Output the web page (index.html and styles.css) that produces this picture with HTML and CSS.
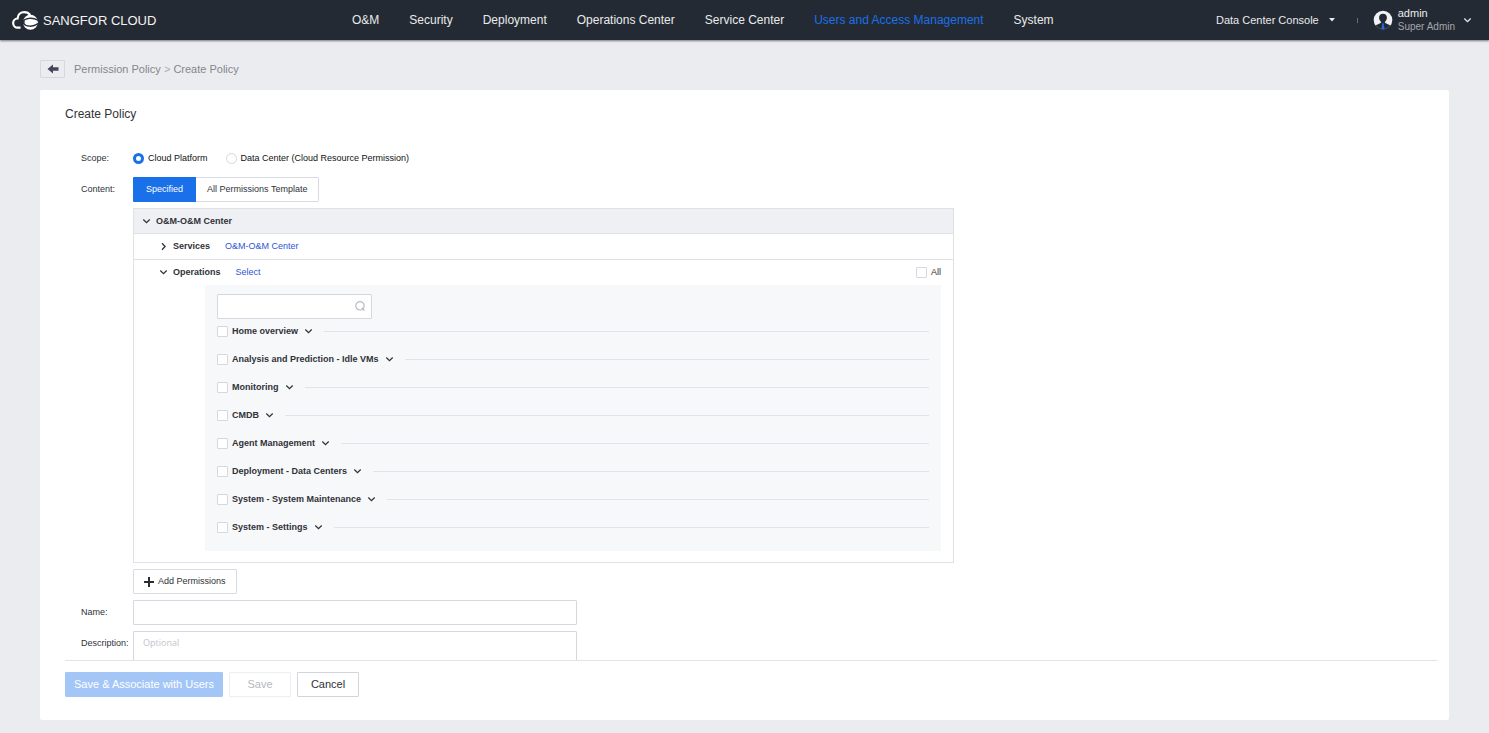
FILE: index.html
```html
<!DOCTYPE html>
<html lang="en">
<head>
<meta charset="utf-8">
<meta name="viewport" content="width=device-width, initial-scale=1">
<title>Create Policy</title>
<link rel="stylesheet" href="styles.css">
</head>
<body>
<svg class="sprite" aria-hidden="true">
  <symbol id="chevron-down" viewBox="0 0 9 9"><path d="M1.3 2.5 4.5 5.6 7.7 2.5" fill="none" stroke="currentColor" stroke-width="1.3"/></symbol>
  <symbol id="chevron-right" viewBox="0 0 9 9"><path d="M3 1.3 6.1 4.5 3 7.7" fill="none" stroke="currentColor" stroke-width="1.3"/></symbol>
</svg>

<header class="topbar">
  <a class="brand" href="#">
    <svg class="brand-logo" viewBox="0 0 26 20" aria-hidden="true">
      <path d="M8.6 17.6H5.8A4.5 4.5 0 0 1 5.6 8.5C5.8 4.6 8.6 2.1 12.2 2.1 14.8 2.1 16.9 3.2 18.2 5" fill="none" stroke="#fff" stroke-width="2.2"/>
      <circle cx="18.4" cy="12.2" r="7.5" fill="#fff"/>
      <path d="M10.4 11.8C13 8.2 20 6.8 26 10.2M10.4 12.6C14 17 21 17.4 26 13.6" fill="none" stroke="#242a33" stroke-width="1.4"/>
      <path d="M9.8 12.2 12.6 10.4V14Z" fill="#242a33"/>
    </svg>
    <span>SANGFOR CLOUD</span>
  </a>
  <nav class="nav">
    <a href="#">O&amp;M</a>
    <a href="#">Security</a>
    <a href="#">Deployment</a>
    <a href="#">Operations Center</a>
    <a href="#">Service Center</a>
    <a class="active" href="#" aria-current="page">Users and Access Management</a>
    <a href="#">System</a>
  </nav>
  <div class="account">
    <button class="console" type="button">Data Center Console
      <svg class="caret" viewBox="0 0 6 4" aria-hidden="true"><path d="M0 0H6L3 3.5Z" fill="currentColor"/></svg>
    </button>
    <span class="separator"></span>
    <button class="user" type="button">
      <svg class="avatar" viewBox="0 0 20 20" aria-hidden="true">
        <circle cx="10" cy="10" r="9.3" fill="#f1f2f3"/>
        <path d="M10 3.8C7.5 3.8 6 5.4 6.1 7.7 6.2 9.8 7.1 11.1 8.3 12 7.8 13.8 3.6 14.2 2.4 16A9.8 9.8 0 0 0 17.6 16C16.4 14.2 12.2 13.8 11.7 12 12.9 11.1 13.8 9.8 13.9 7.7 14 5.4 12.5 3.8 10 3.8Z" fill="#242a33"/>
        <path d="M3 16A9.3 9.3 0 0 0 17 16" fill="none" stroke="#596069" stroke-width=".6"/>
        <path d="M8.7 13.4H11.3L10.7 15 11.7 18.4 10 19.4 8.3 18.4 9.3 15Z" fill="#1a70e8"/>
      </svg>
      <span class="user-text"><span class="user-name">admin</span><span class="user-role">Super Admin</span></span>
      <svg class="icon" aria-hidden="true"><use href="#chevron-down"/></svg>
    </button>
  </div>
</header>

<div class="breadcrumb">
  <button class="back" type="button" aria-label="Back">
    <svg viewBox="0 0 12 10" aria-hidden="true"><path d="M.5 5 6 .5V3.3H11.5V6.7H6V9.5Z" fill="#414658"/></svg>
  </button>
  <nav><a href="#">Permission Policy</a> <span class="crumb-arrow">&gt;</span> <span>Create Policy</span></nav>
</div>

<main class="card">
  <h1 class="title">Create Policy</h1>
  <form class="form" id="policy">
    <div class="row" role="radiogroup" aria-labelledby="scope-label">
      <span class="label" id="scope-label">Scope:</span>
      <div class="radios">
        <label class="choice"><input class="radio" type="radio" name="scope" checked>Cloud Platform</label>
        <label class="choice"><input class="radio" type="radio" name="scope">Data Center (Cloud Resource Permission)</label>
      </div>
    </div>
    <div class="row">
      <span class="label">Content:</span>
      <div class="content">
        <div class="tabs">
          <button class="tab selected" type="button">Specified</button>
          <button class="tab" type="button">All Permissions Template</button>
        </div>
        <section class="panel">
          <div class="panel-head">
            <button class="toggle" type="button" aria-expanded="true"><svg class="icon" aria-hidden="true"><use href="#chevron-down"/></svg>O&amp;M-O&amp;M Center</button>
          </div>
          <div class="panel-row services">
            <button class="toggle" type="button" aria-expanded="false"><svg class="icon" aria-hidden="true"><use href="#chevron-right"/></svg>Services</button>
            <a class="link" href="#">O&amp;M-O&amp;M Center</a>
          </div>
          <div class="panel-row">
            <button class="toggle" type="button" aria-expanded="true"><svg class="icon" aria-hidden="true"><use href="#chevron-down"/></svg>Operations</button>
            <a class="link" href="#">Select</a>
            <label class="choice all"><input class="check" type="checkbox">All</label>
          </div>
          <div class="operations">
            <div class="search">
              <input class="search-input" type="search" aria-label="Search operations">
              <svg class="search-icon" viewBox="0 0 12 12" aria-hidden="true"><circle cx="6" cy="5.8" r="4.2" fill="none" stroke="#b9bbc0" stroke-width="1.2"/><path d="M7.8 7.8 10.4 10.6" stroke="#b9bbc0" stroke-width="1.3"/></svg>
            </div>
            <ul class="groups">
              <li class="group"><label class="choice"><input class="check" type="checkbox">Home overview</label><button class="expand" type="button" aria-label="Expand Home overview"><svg class="icon"><use href="#chevron-down"/></svg></button></li>
              <li class="group"><label class="choice"><input class="check" type="checkbox">Analysis and Prediction - Idle VMs</label><button class="expand" type="button" aria-label="Expand Analysis and Prediction"><svg class="icon"><use href="#chevron-down"/></svg></button></li>
              <li class="group"><label class="choice"><input class="check" type="checkbox">Monitoring</label><button class="expand" type="button" aria-label="Expand Monitoring"><svg class="icon"><use href="#chevron-down"/></svg></button></li>
              <li class="group"><label class="choice"><input class="check" type="checkbox">CMDB</label><button class="expand" type="button" aria-label="Expand CMDB"><svg class="icon"><use href="#chevron-down"/></svg></button></li>
              <li class="group"><label class="choice"><input class="check" type="checkbox">Agent Management</label><button class="expand" type="button" aria-label="Expand Agent Management"><svg class="icon"><use href="#chevron-down"/></svg></button></li>
              <li class="group"><label class="choice"><input class="check" type="checkbox">Deployment - Data Centers</label><button class="expand" type="button" aria-label="Expand Deployment"><svg class="icon"><use href="#chevron-down"/></svg></button></li>
              <li class="group"><label class="choice"><input class="check" type="checkbox">System - System Maintenance</label><button class="expand" type="button" aria-label="Expand System Maintenance"><svg class="icon"><use href="#chevron-down"/></svg></button></li>
              <li class="group"><label class="choice"><input class="check" type="checkbox">System - Settings</label><button class="expand" type="button" aria-label="Expand Settings"><svg class="icon"><use href="#chevron-down"/></svg></button></li>
            </ul>
          </div>
        </section>
        <button class="add" type="button"><svg class="plus" viewBox="0 0 10 10" aria-hidden="true"><path d="M5 0V10M0 5H10" stroke="#2b2d33" stroke-width="2"/></svg>Add Permissions</button>
      </div>
    </div>
    <div class="row">
      <label class="label" for="name">Name:</label>
      <input class="field" id="name" type="text">
    </div>
    <div class="row">
      <label class="label" for="description">Description:</label>
      <textarea class="field area" id="description" placeholder="Optional"></textarea>
    </div>
  </form>
  <footer class="actions">
    <button class="btn primary" type="submit" form="policy" disabled>Save &amp; Associate with Users</button>
    <button class="btn save" type="submit" form="policy" disabled>Save</button>
    <button class="btn" type="button">Cancel</button>
  </footer>
</main>
</body>
</html>
```
FILE: styles.css
```css
* { box-sizing: border-box; }

body {
  margin: 0;
  height: 100vh;
  display: flex;
  flex-direction: column;
  background: #ebecf0;
  color: #303238;
  font: 9px/13px "Liberation Sans", Arial, sans-serif;
}

.sprite { display: none; }
a { color: inherit; text-decoration: none; }
button { padding: 0; border: 0; background: none; color: inherit; font: inherit; cursor: pointer; }
input, textarea { margin: 0; font: inherit; }
.icon { width: 9px; height: 9px; flex: none; }

.topbar {
  flex: none;
  display: grid;
  grid-template-columns: 340px 1fr auto;
  align-items: center;
  height: 40px;
  padding: 0 17px 0 12px;
  background: #242a33;
  box-shadow: 0 1px 2px rgba(36, 42, 51, 0.6);
  color: #e9eaec;
}
.brand { display: flex; align-items: center; gap: 5px; font-size: 13px; color: #f4f4f5; }
.brand-logo { width: 26px; height: 20px; }
.nav { display: flex; gap: 30px; font-size: 12px; white-space: nowrap; }
.nav .active { color: #1a70e8; }
.account { display: flex; align-items: center; font-size: 11px; white-space: nowrap; }
.console { display: flex; align-items: center; gap: 10px; }
.caret { width: 6px; height: 4px; }
.separator { width: 1px; height: 5px; margin: 0 15px 0 22px; background: #6a6f77; }
.user { display: flex; align-items: center; text-align: left; }
.avatar { width: 20px; height: 20px; margin-right: 5px; }
.user-text { display: flex; flex-direction: column; margin-right: 8px; }
.user-role { font-size: 10px; color: #a3a6ab; }

.breadcrumb {
  flex: none;
  display: flex;
  align-items: center;
  gap: 9px;
  height: 50px;
  padding: 8px 40px 0;
  color: #85878c;
  font-size: 11px;
}
.back {
  display: grid;
  place-items: center;
  width: 25px;
  height: 18px;
  border: 1px solid #d5d7dd;
  border-radius: 1px;
}
.back svg { width: 12px; height: 10px; }
.crumb-arrow { color: #a8aab0; }

.card {
  flex: 1;
  min-height: 0;
  display: flex;
  flex-direction: column;
  margin: 0 40px 13px;
  padding: 0 12px 0 25px;
  background: #fff;
  border-radius: 2px;
}
.title { flex: none; margin: 0; padding: 16px 0 24px; font-size: 12px; font-weight: 400; line-height: 16px; }

.form {
  flex: 1;
  min-height: 0;
  overflow: hidden;
  display: flex;
  flex-direction: column;
  gap: 6px;
  padding-left: 16px;
}
.row { flex: none; display: flex; align-items: flex-start; }
.label { flex: none; width: 52px; line-height: 25px; white-space: nowrap; }
.content { flex: 1; min-width: 0; display: flex; flex-direction: column; align-items: flex-start; gap: 6px; }

.radios { display: flex; gap: 18px; height: 25px; color: #111; }
.choice { display: flex; align-items: center; gap: 4px; white-space: nowrap; }
.radio, .check { appearance: none; flex: none; width: 11px; height: 11px; border: 1px solid #d6d8df; background: #fff; }
.radio { border-radius: 50%; }
.radio:checked { border: 3px solid #1a70e8; }
.check { border-radius: 1px; }

.tabs { display: flex; height: 25px; border: 1px solid #d9dbe2; border-radius: 1px; }
.tab { padding: 0 11px; }
.tab.selected { margin: -1px 0 -1px -1px; padding: 0 13px; background: #1a70e8; color: #fff; border-radius: 1px 0 0 1px; }

.panel { width: 100%; max-width: 821px; border: 1px solid #dfe1e6; padding-bottom: 11px; }
.panel-head { display: flex; align-items: center; height: 25px; padding-left: 8px; background: #eff0f4; border-bottom: 1px solid #dfe1e6; }
.panel-row { display: flex; align-items: center; gap: 15px; height: 25px; padding: 0 12px 0 25px; }
.services { height: 26px; border-bottom: 1px solid #dfe1e6; }
.toggle { display: flex; align-items: center; gap: 5px; font-weight: 700; }
.link { color: #3054d8; }
.all { margin-left: auto; }

.operations { margin: 0 12px 0 71px; padding: 9px 12px 12px; background: #f7f8fa; }
.search { position: relative; width: 155px; height: 25px; }
.search-input { appearance: none; display: block; width: 100%; height: 25px; padding: 0 24px 0 8px; border: 1px solid #d6d8df; border-radius: 1px; background: #fff; }
.search-icon { position: absolute; right: 6px; top: 6px; width: 12px; height: 12px; }
.groups { display: flex; flex-direction: column; gap: 4px; margin: 0; padding: 0; list-style: none; }
.group { display: flex; align-items: center; height: 24px; font-weight: 700; }
.group::after { content: ""; flex: 1; height: 1px; margin-left: 11px; background: #e1e3e8; }
.expand { display: flex; margin-left: 6px; }

.add { display: flex; align-items: center; gap: 4px; height: 25px; padding: 0 10px; border: 1px solid #d9dbe2; border-radius: 1px; }
.plus { width: 10px; height: 10px; }
.field { width: 444px; height: 25px; padding: 0 9px; border: 1px solid #d6d8df; border-radius: 1px; background: #fff; }
.area { height: 60px; padding: 4px 9px; resize: none; font-family: "Open Sans", sans-serif; }
.area::placeholder { color: #c3c5ca; }

.actions { flex: none; display: flex; gap: 6px; padding: 11px 0 23px; border-top: 1px solid #e1e3ea; }
.btn { width: 62px; height: 25px; border: 1px solid #d3d5dd; border-radius: 1px; font-size: 11px; white-space: nowrap; }
.primary { width: auto; padding: 0 8px; border-color: #a3c6f7; background: #a3c6f7; color: #fff; }
.save { border-color: #eceef2; color: #b5b7bc; }
```
